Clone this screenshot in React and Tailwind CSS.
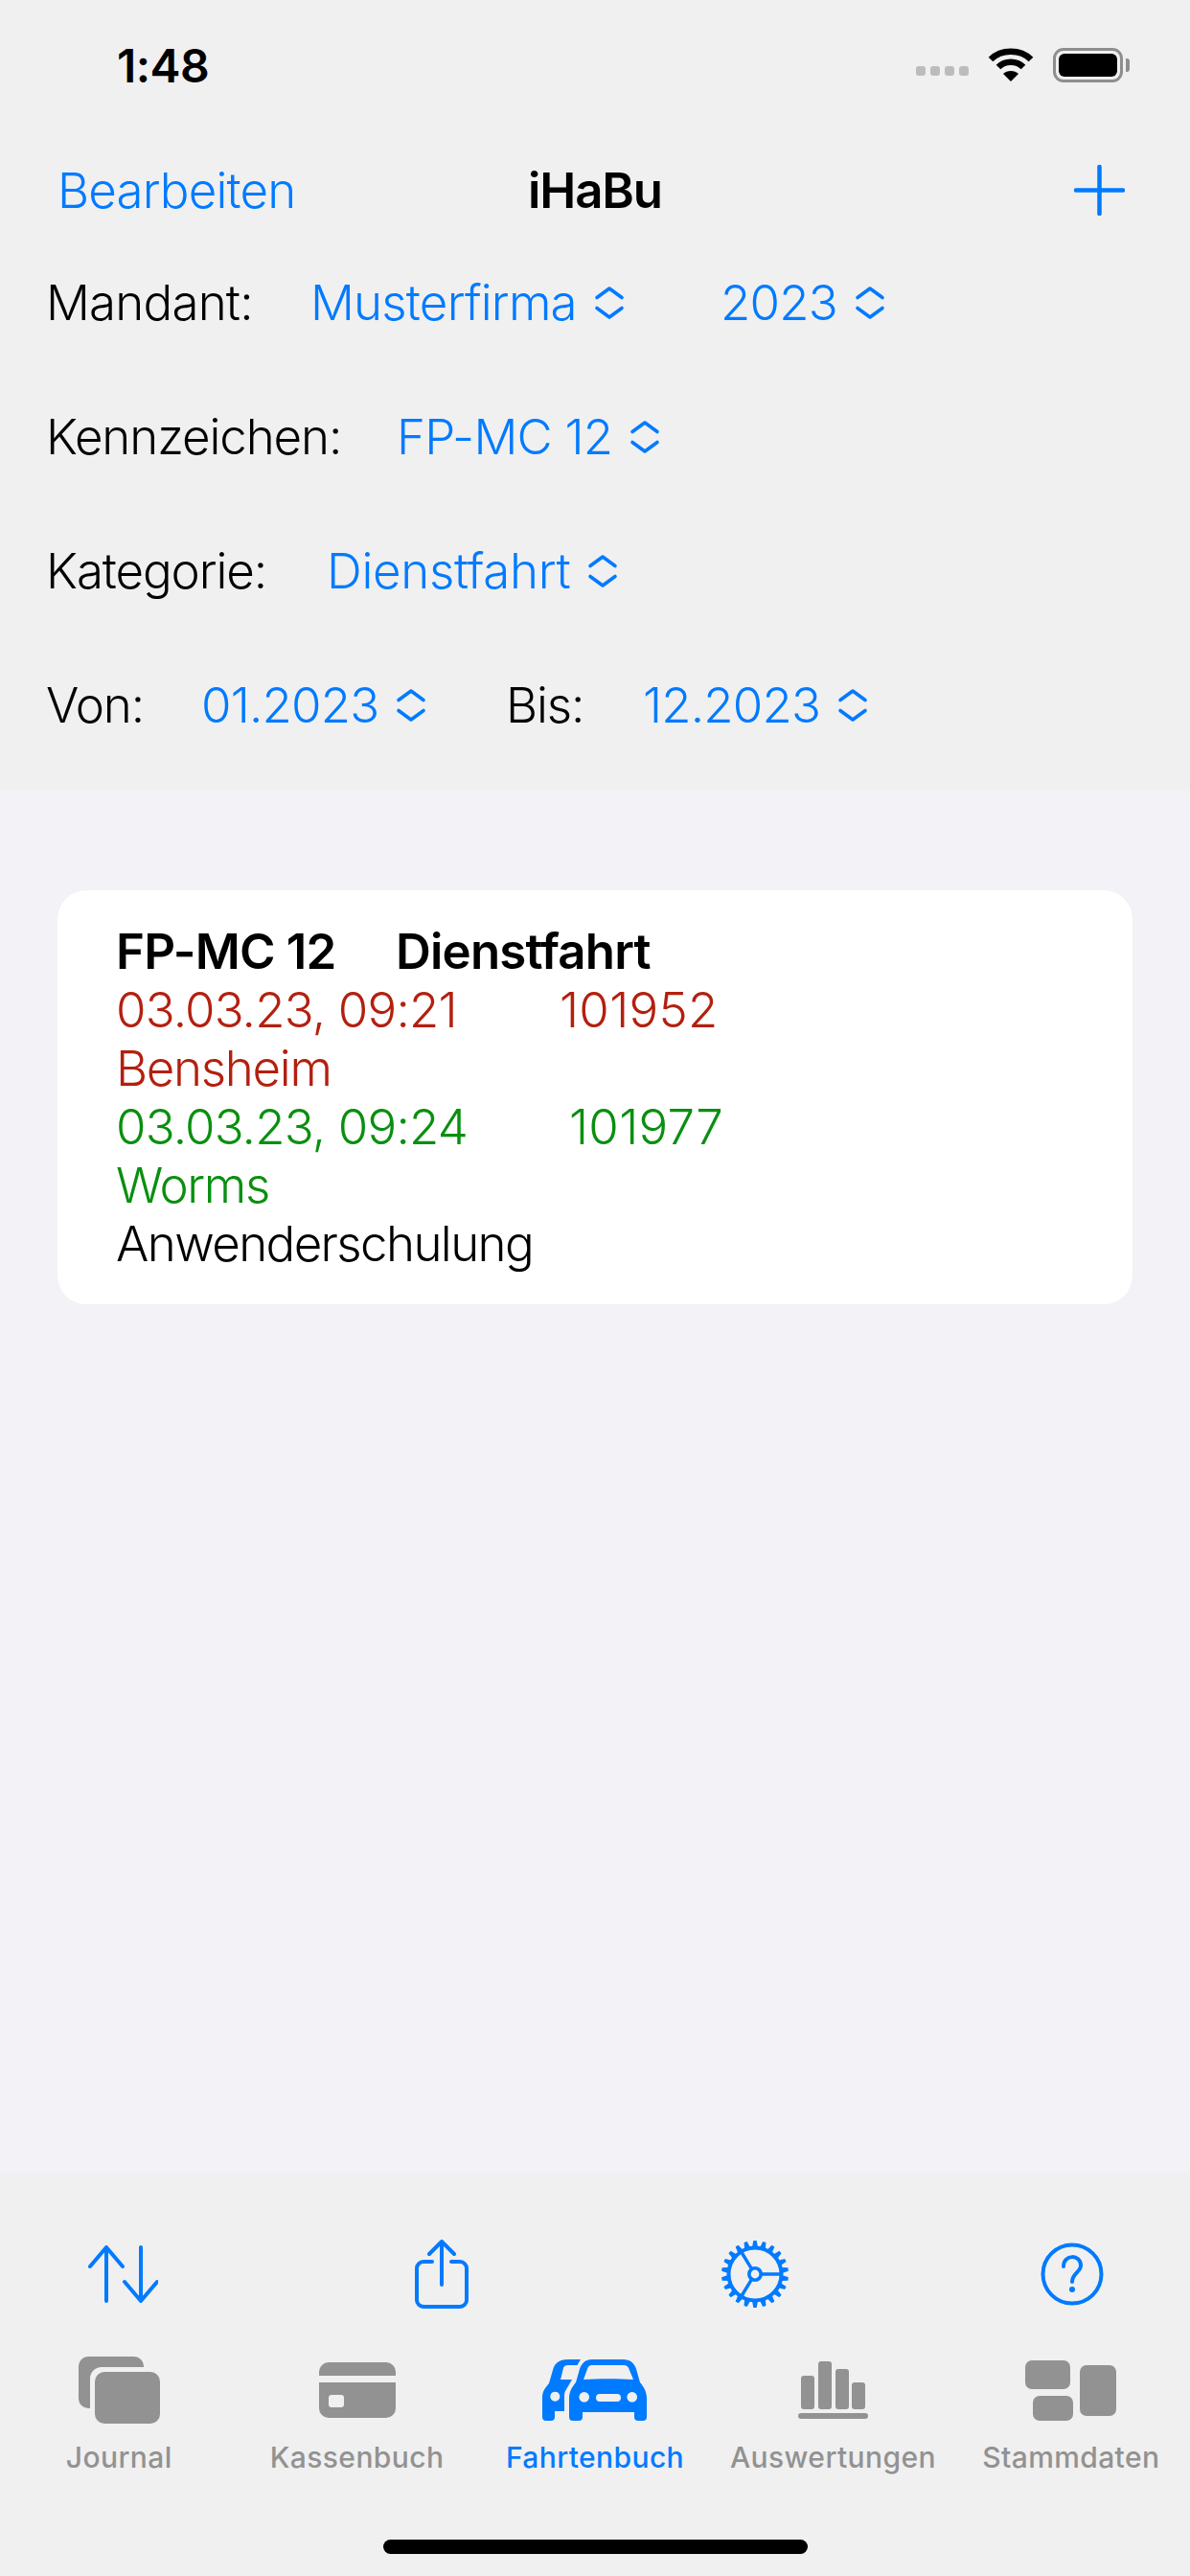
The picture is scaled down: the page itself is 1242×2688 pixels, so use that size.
import React from 'react';

const blue = 'text-[#007aff]';

const Chevrons = () => (
    <svg viewBox="0 0 36 36" className="w-[36px] h-[36px] ml-[16px] shrink-0" fill="none" stroke="#007aff" strokeWidth="3.6" strokeLinecap="round" strokeLinejoin="round">
        <path d="M5 12.5 L18 3 L31 12.5" />
        <path d="M5 23.5 L18 33 L31 23.5" />
    </svg>
);

const Picker = ({ label, className = '', textClass = 'tracking-[-0.8px]' }) => (
    <div className={`flex items-center ${blue} ${className}`}>
        <span className={textClass}>{label}</span>
        <Chevrons />
    </div>
);

const SortIcon = () => (
    <svg viewBox="0 0 73 60" className="w-[73px] h-[60px]" fill="none" stroke="#007aff" strokeWidth="4" strokeLinecap="round" strokeLinejoin="round">
        <path d="M19 2 V58 M2 22 L19 2 L36 22" />
        <path d="M55 2 V58 M38 38 L55 58 L72 38" />
    </svg>
);

const ShareIcon = () => (
    <svg viewBox="0 0 56 72" className="w-[56px] h-[72px] ml-[268px]" fill="none" stroke="#007aff" strokeWidth="4" strokeLinecap="round" strokeLinejoin="round">
        <path d="M28 2 V47 M15 15 L28 2 L41 15" />
        <path d="M18 23 H9 a7 7 0 0 0 -7 7 V63 a7 7 0 0 0 7 7 H47 a7 7 0 0 0 7 -7 V30 a7 7 0 0 0 -7 -7 H38" />
    </svg>
);

const teeth = Array.from({ length: 22 }, (_, i) => (i * 360) / 22);

const GearIcon = () => (
    <svg viewBox="0 0 72 72" className="w-[72px] h-[72px] ml-[263px]" fill="none" stroke="#007aff">
        <circle cx="36" cy="36" r="27.5" strokeWidth="4" />
        {teeth.map(a => (
            <path key={a} d="M33 8 L34.3 1 H37.7 L39 8 Z" fill="#007aff" stroke="none" transform={`rotate(${a} 36 36)`} />
        ))}
        <circle cx="36" cy="36" r="6.2" strokeWidth="3.6" />
        <path d="M42 36 H63 M32.7 30.8 L21.5 12.5 M32.7 41.2 L21.5 59.5" strokeWidth="3.4" />
    </svg>
);

const HelpIcon = () => (
    <svg viewBox="0 0 66 66" className="w-[66px] h-[66px] ml-[262px]" fill="none" stroke="#007aff">
        <circle cx="33" cy="33" r="30.5" strokeWidth="4" />
        <path d="M24 25 C24 12 42 12 42 24 C42 31 33 32 33 41" strokeWidth="4" strokeLinecap="round" />
        <circle cx="33" cy="49" r="3" fill="#007aff" stroke="none" />
    </svg>
);

const JournalIcon = () => (
    <svg viewBox="0 0 85 70" className="w-[85px] h-[70px]">
        <path d="M68 11 V10 a10 10 0 0 0 -10 -10 H10 a10 10 0 0 0 -10 10 V44 a10 10 0 0 0 10 10 h2 V23 a12 12 0 0 1 12 -12 Z" fill="#929292" />
        <rect x="17" y="16" width="68" height="54" rx="10" fill="#929292" />
    </svg>
);

const CashIcon = () => (
    <svg viewBox="0 0 80 58" className="w-[80px] h-[58px]">
        <path d="M0 14 V10 a10 10 0 0 1 10 -10 H70 a10 10 0 0 1 10 10 V14 Z" fill="#929292" />
        <path fillRule="evenodd" d="M0 21 H80 V48 a10 10 0 0 1 -10 10 H10 a10 10 0 0 1 -10 -10 Z M13 34 a3 3 0 0 0 -3 3 V44 a3 3 0 0 0 3 3 H23 a3 3 0 0 0 3 -3 V37 a3 3 0 0 0 -3 -3 Z" fill="#929292" />
    </svg>
);

const CarsIcon = () => (
    <svg viewBox="0 0 110 64" className="w-[110px] h-[64px]" fill="#007aff">
        {/* hinteres Auto */}
        <path fillRule="evenodd" d="M40 0 L36.5 6 H27 C24 6 22.5 7 22 9 L19 21 H31 L24 33 C23 35 23 37 23 39 V54 H13 V60 a4 4 0 0 1 -4 4 H4 a4 4 0 0 1 -4 -4 V40 C0 33 3 30 7 25 L11 11 C13 4 17 0 27 0 Z M13.3 33.7 a5 5 0 1 0 0.01 0 Z" />
        {/* vorderes Auto */}
        <path fillRule="evenodd" d="M52 0 H84 C92 0 96 4 98 10 L102 24 C106 29 109 33 109 41 V60 a4 4 0 0 1 -4 4 H100 a4 4 0 0 1 -4 -4 V55 H42 V60 a4 4 0 0 1 -4 4 H32 a4 4 0 0 1 -4 -4 V41 C28 33 31 29 35 24 L39 10 C41 4 45 0 52 0 Z M52 6 H85 C88 6 90 8 90.5 10 L95 21 C80 20 58 20 43 21 L47 10 C47.5 8 49 6 52 6 Z M43.7 34 a5.3 5.3 0 1 0 0.01 0 Z M93.7 34 a5.3 5.3 0 1 0 0.01 0 Z M60 36 a4 4 0 0 0 0 8 H78 a4 4 0 0 0 0 -8 Z" />
    </svg>
);

const StatsIcon = () => (
    <svg viewBox="0 0 73 60" className="w-[73px] h-[60px]" fill="#929292">
        <rect x="3" y="15" width="14" height="35" rx="3" />
        <rect x="21" y="0" width="14" height="50" rx="3" />
        <rect x="39" y="8" width="14" height="42" rx="3" />
        <rect x="56" y="22" width="14" height="28" rx="3" />
        <rect x="0" y="54" width="73" height="6" rx="3" />
    </svg>
);

const MasterDataIcon = () => (
    <svg viewBox="0 0 95 63" className="w-[95px] h-[63px]" fill="#929292">
        <rect x="0" y="0" width="47" height="30" rx="7" />
        <rect x="8" y="37" width="42" height="26" rx="7" />
        <rect x="57" y="5" width="38" height="53" rx="7" />
    </svg>
);

const tabs = [
    { label: 'Journal', Icon: JournalIcon },
    { label: 'Kassenbuch', Icon: CashIcon },
    { label: 'Fahrtenbuch', Icon: CarsIcon, active: true },
    { label: 'Auswertungen', Icon: StatsIcon },
    { label: 'Stammdaten', Icon: MasterDataIcon },
];

const App = () => {
    return (
        <div className="w-[1242px] h-[2688px] flex flex-col bg-[#f2f2f7] text-black text-[51px] leading-[61px] overflow-hidden font-['Inter','Liberation_Sans',sans-serif] font-[350] tracking-[-1.1px]">
            {/* Header */}
            <div className="h-[825px] shrink-0 bg-[#f0f0f0] flex flex-col">
                {/* Status bar */}
                <div className="h-[132px] shrink-0 flex items-center justify-between pl-[122px] pr-[70px] pt-[4px]">
                    <span className="text-[48px] font-semibold tracking-[-0.5px]">1:48</span>
                    <div className="flex items-center">
                        <div className="flex gap-[5px] mt-[12px] mr-[20px]">
                            <div className="w-[10px] h-[10px] rounded-[3px] bg-[#bcbcbc]" />
                            <div className="w-[10px] h-[10px] rounded-[3px] bg-[#bcbcbc]" />
                            <div className="w-[10px] h-[10px] rounded-[3px] bg-[#bcbcbc]" />
                            <div className="w-[10px] h-[10px] rounded-[3px] bg-[#bcbcbc]" />
                        </div>
                        <svg viewBox="0 0 48 36" className="w-[48px] h-[36px] mr-[20px]" fill="none" stroke="black" strokeWidth="6.5">
                            <path d="M3 12 C14 1 34 1 45 12" />
                            <path d="M11 20 C18 13 30 13 37 20" />
                            <path d="M24 35 L16 27 C20 23 28 23 32 27 Z" fill="black" stroke="none" />
                        </svg>
                        <div className="relative w-[73px] h-[36px] rounded-[11px] border-[3px] border-[#8e8e8e] p-[3px]">
                            <div className="w-full h-full rounded-[6px] bg-black" />
                            <div className="absolute right-[-10px] top-[8px] w-[4px] h-[14px] rounded-r-[3px] bg-[#8e8e8e]" />
                        </div>
                    </div>
                </div>

                {/* Navigation bar */}
                <div className="h-[132px] shrink-0 relative flex items-center justify-between pl-[60px] pr-[68px]">
                    <span className={`tracking-[-0.8px] ${blue}`}>Bearbeiten</span>
                    <span className="absolute left-0 right-0 text-center font-semibold">iHaBu</span>
                    <svg viewBox="0 0 53 53" className="w-[53px] h-[53px]" fill="none" stroke="#007aff" strokeWidth="4.5" strokeLinecap="round">
                        <path d="M26.5 2 V51 M2 26.5 H51" />
                    </svg>
                </div>

                {/* Filter */}
                <div className="flex flex-col pl-[48px] gap-[79px] mt-[21px]">
                    <div className="flex items-center">
                        <span className="w-[276px] tracking-[-0.8px]">Mandant:</span>
                        <Picker label="Musterfirma" className="w-[428px]" />
                        <Picker label="2023" />
                    </div>
                    <div className="flex items-center">
                        <span className="w-[366px]">Kennzeichen:</span>
                        <Picker label="FP-MC 12" />
                    </div>
                    <div className="flex items-center">
                        <span className="w-[293px]">Kategorie:</span>
                        <Picker label="Dienstfahrt" textClass="tracking-[-0.3px]" />
                    </div>
                    <div className="flex items-center">
                        <span className="w-[162px]">Von:</span>
                        <Picker label="01.2023" className="w-[318px]" />
                        <span className="w-[143px]">Bis:</span>
                        <Picker label="12.2023" />
                    </div>
                </div>
            </div>

            {/* Liste */}
            <div className="flex-1 pt-[104px] pl-[60px] pr-[60px]">
                <div className="bg-white rounded-[30px] h-[432px] pl-[61px] pt-[33px]">
                    <div className="flex font-semibold tracking-[-0.8px]">
                        <span className="w-[292px]">FP-MC 12</span>
                        <span>Dienstfahrt</span>
                    </div>
                    <div className="flex text-[#b3200f] font-light tracking-[-0.8px]">
                        <span className="w-[463px]">03.03.23, 09:21</span>
                        <span className="tracking-[0.3px]">101952</span>
                    </div>
                    <div className="text-[#b3200f] font-light tracking-[-1.3px]">Bensheim</div>
                    <div className="flex text-[#0a8f0f] font-light tracking-[-0.8px]">
                        <span className="w-[473px]">03.03.23, 09:24</span>
                        <span className="tracking-[0.3px]">101977</span>
                    </div>
                    <div className="text-[#0a8f0f] font-light tracking-[-1.3px]">Worms</div>
                    <div className="font-light tracking-[-1.6px]">Anwenderschulung</div>
                </div>
            </div>

            {/* Toolbar und Tabs */}
            <div className="h-[421px] shrink-0 bg-[#f0f0f0] flex flex-col">
                <div className="flex items-center h-[72px] mt-[70px] pl-[92px]">
                    <SortIcon />
                    <ShareIcon />
                    <GearIcon />
                    <HelpIcon />
                </div>
                <div className="grid grid-cols-5 mt-[49px]">
                    {tabs.map(({ label, Icon, active }) => (
                        <div key={label} className="flex flex-col items-center">
                            <div className="h-[72px] flex items-center justify-center">
                                <Icon />
                            </div>
                            <span className={`mt-[16px] text-[30px] leading-[36px] font-medium tracking-[0.4px] ${active ? blue : 'text-[#929292]'}`}>
                                {label}
                            </span>
                        </div>
                    ))}
                </div>
                <div className="w-[443px] h-[15px] rounded-full bg-black mx-auto mt-[68px]" />
            </div>
        </div>
    );
};

export default App;
